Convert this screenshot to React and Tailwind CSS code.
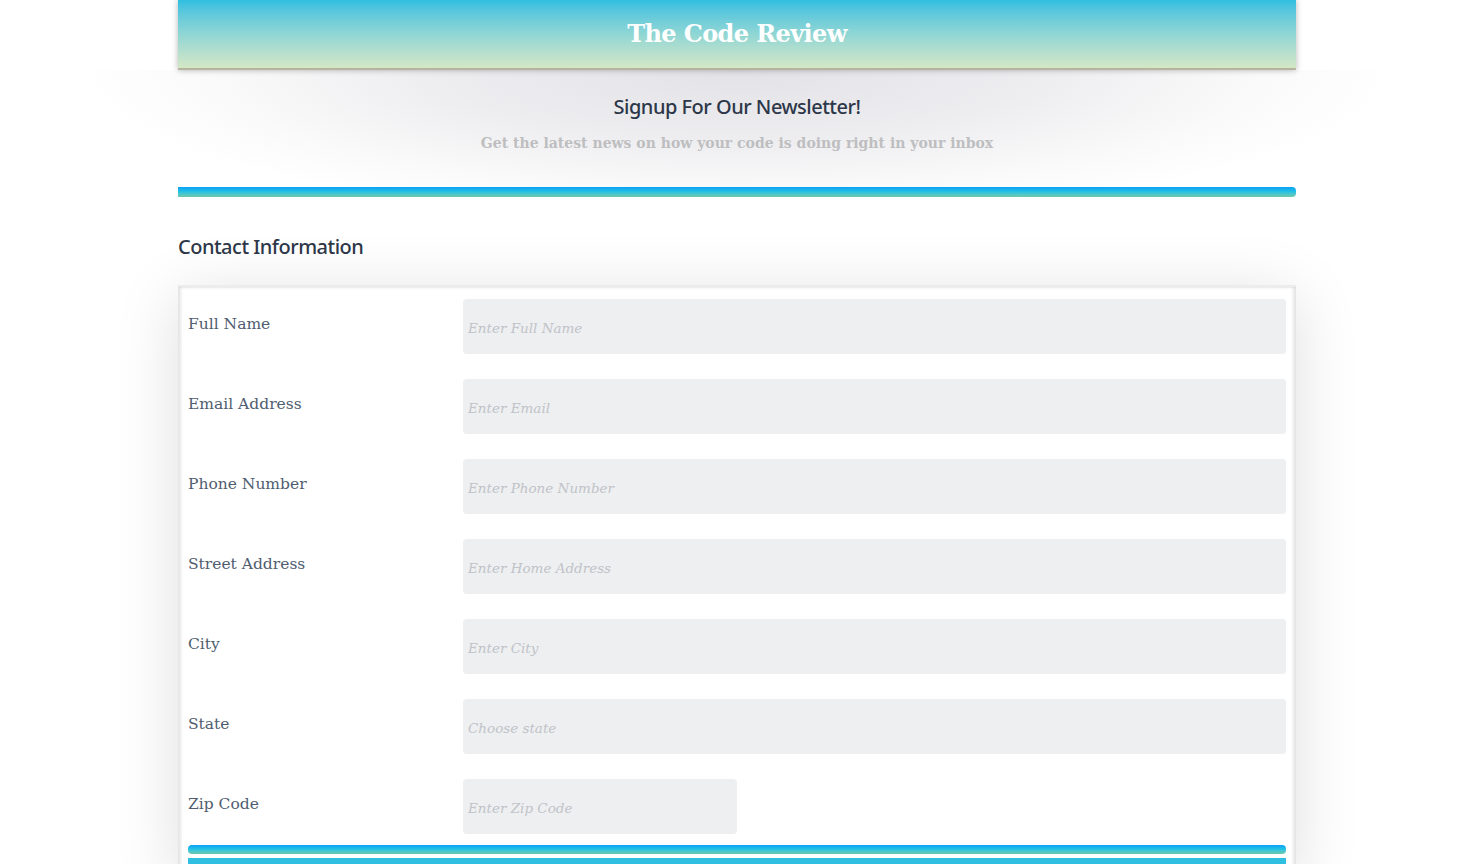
import React from 'react';

const serif = { fontFamily: '"DejaVu Serif", "Liberation Serif", serif' };
const hand = { fontFamily: '"Noto Sans", "DejaVu Sans", sans-serif' };

const fields = [
  { label: 'Full Name', placeholder: 'Enter Full Name' },
  { label: 'Email Address', placeholder: 'Enter Email' },
  { label: 'Phone Number', placeholder: 'Enter Phone Number' },
  { label: 'Street Address', placeholder: 'Enter Home Address' },
  { label: 'City', placeholder: 'Enter City' },
  { label: 'State', placeholder: 'Choose state' },
  { label: 'Zip Code', placeholder: 'Enter Zip Code', short: true },
];

const App = () => {
  return (
    <div className="min-h-screen bg-white overflow-hidden">
      <div className="w-[1118px] ml-[178px]">
        <header className="relative z-10 h-[70px] flex items-center justify-center bg-gradient-to-b from-[#2fbfe0] via-[#8fd6d4] to-[#d4e7c6] border-b-2 border-[#b5b59f] shadow-[0_0_6px_rgba(0,0,0,0.3)]">
          <h1 className="text-[24px] font-bold text-white tracking-tight" style={serif}>
            The Code Review
          </h1>
        </header>

        <section className="-mx-[120px] h-[117px] flex flex-col items-center pt-[22px] bg-[radial-gradient(ellipse_660px_150px_at_50%_0%,#e3e3e7_0%,#ededf0_45%,#fafafa_80%,#ffffff_100%)]">
          <h2 className="text-[20px] font-medium text-[#2d3748] leading-[30px] tracking-tight" style={hand}>
            Signup For Our Newsletter!
          </h2>
          <p className="mt-[11px] text-[14px] font-bold text-[#bebec0]" style={serif}>
            Get the latest news on how your code is doing right in your inbox
          </p>
        </section>

        <div className="h-[10px] rounded-r-[4px] bg-gradient-to-b from-[#0aa0f5] via-[#27c3e2] to-[#6ec9a8]" />

        <h3 className="mt-[35px] text-[20px] font-medium text-[#2d3748] leading-[30px] tracking-tight" style={hand}>
          Contact Information
        </h3>

        <div className="mt-[23px] bg-white border-t-2 border-[#ececee] shadow-[inset_3px_0_3px_rgba(0,0,0,0.1),inset_-3px_0_3px_rgba(0,0,0,0.1),0_10px_60px_rgba(0,0,0,0.13)] pl-[10px] pr-[10px] pt-[12px] flex flex-col gap-[25px]">
          {fields.map((f) => (
            <div key={f.label} className="flex items-start h-[55px]">
              <label className="w-[275px] pt-[13px] text-[15.5px] leading-[24px] text-[#4f5d70]" style={serif}>
                {f.label}
              </label>
              <input
                placeholder={f.placeholder}
                className={`${f.short ? 'w-[274px]' : 'flex-1'} h-[55px] rounded-[4px] bg-[#eeeff1] px-[5px] pt-[2px] text-[13.5px] italic text-[#4f5d70] placeholder:text-[#c0c3c8] outline-none`}
                style={serif}
              />
            </div>
          ))}
          <div className="-mt-[14px] flex flex-col gap-[4px]">
            <div className="h-[9px] rounded-[4px] bg-gradient-to-b from-[#0aa0f5] via-[#27c3e2] to-[#6ec9a8]" />
            <div className="h-[20px] bg-[#30bfe0]" />
          </div>
        </div>
      </div>
    </div>
  );
};

export default App;
